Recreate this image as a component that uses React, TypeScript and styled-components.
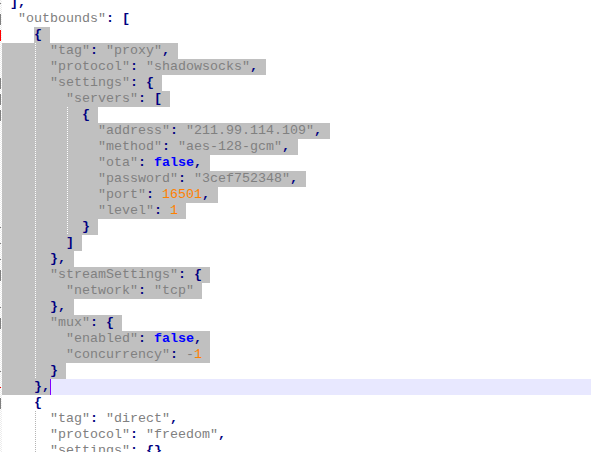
import React from "react";
import styled, { createGlobalStyle, css } from "styled-components";

const Global = createGlobalStyle`
  html, body { margin: 0; padding: 0; background: #ffffff; }
  body { width: 591px; height: 452px; overflow: hidden; }
`;

const CH = 8; // character advance in px

type Sel = "none" | "full" | "start" | "end";
type Marker = "bar" | "red" | "tick" | "redtick" | null;

interface LineData {
  indent: number;
  text: string;
  sel: Sel;
  marker: Marker;
  guides: number[];
  current?: boolean;
}

const L = (
  indent: number,
  text: string,
  sel: Sel,
  marker: Marker,
  guides: number[] = [],
  current = false
): LineData => ({ indent, text, sel, marker, guides, current });

const lines: LineData[] = [
  L(1, "],", "none", "tick"),
  L(2, '"outbounds": [', "none", "bar"),
  L(4, "{", "start", "red"),
  L(6, '"tag": "proxy",', "full", null, [4]),
  L(6, '"protocol": "shadowsocks",', "full", null, [4]),
  L(6, '"settings": {', "full", "bar", [4]),
  L(8, '"servers": [', "full", "bar", [4]),
  L(10, "{", "full", "bar", [4, 8]),
  L(12, '"address": "211.99.114.109",', "full", null, [4, 8]),
  L(12, '"method": "aes-128-gcm",', "full", null, [4, 8]),
  L(12, '"ota": false,', "full", null, [4, 8]),
  L(12, '"password": "3cef752348",', "full", null, [4, 8]),
  L(12, '"port": 16501,', "full", null, [4, 8]),
  L(12, '"level": 1', "full", null, [4, 8]),
  L(10, "}", "full", "tick", [4, 8]),
  L(8, "]", "full", "tick", [4]),
  L(6, "},", "full", "tick", [4]),
  L(6, '"streamSettings": {', "full", "bar", [4]),
  L(8, '"network": "tcp"', "full", null, [4]),
  L(6, "},", "full", "tick", [4]),
  L(6, '"mux": {', "full", "bar", [4]),
  L(8, '"enabled": false,', "full", null, [4]),
  L(8, '"concurrency": -1', "full", null, [4]),
  L(6, "}", "full", "tick", [4]),
  L(4, "},", "end", "redtick", [], true),
  L(4, "{", "none", "bar"),
  L(6, '"tag": "direct",', "none", null, [4]),
  L(6, '"protocol": "freedom",', "none", null, [4]),
  L(6, '"settings": {}', "none", null, [4]),
];

type Kind = "str" | "num" | "kw" | "brace" | "op" | "minus" | "ws";

function tokenize(text: string): { kind: Kind; value: string }[] {
  const re = /("(?:[^"\\]|\\.)*")|(\d+(?:\.\d+)?)|(true|false|null)|([{}\[\]])|([:,])|(-)|(\s+)/g;
  const out: { kind: Kind; value: string }[] = [];
  let m: RegExpExecArray | null;
  while ((m = re.exec(text))) {
    if (m[1]) out.push({ kind: "str", value: m[1] });
    else if (m[2]) out.push({ kind: "num", value: m[2] });
    else if (m[3]) out.push({ kind: "kw", value: m[3] });
    else if (m[4]) out.push({ kind: "brace", value: m[4] });
    else if (m[5]) out.push({ kind: "op", value: m[5] });
    else if (m[6]) out.push({ kind: "minus", value: m[6] });
    else if (m[7]) out.push({ kind: "ws", value: m[7] });
  }
  return out;
}

const Editor = styled.div`
  width: 591px;
  height: 452px;
  overflow: hidden;
  background: #ffffff;
  font-family: "Liberation Mono", "Courier New", monospace;
  font-size: 13.333px;
  line-height: 16px;
`;

const Lines = styled.div`
  display: flex;
  flex-direction: column;
  margin-top: -5px;
`;

const Row = styled.div`
  display: flex;
  height: 16px;
`;

const Margin = styled.div`
  flex: 0 0 2px;
  height: 16px;
  display: flex;
  align-items: center;
  background: repeating-conic-gradient(#ececec 0 25%, #ffffff 0 50%) 0 0 / 2px 2px;
`;

const Mark = styled.span<{ $red?: boolean; $tall?: boolean }>`
  width: 1px;
  height: ${(p) => (p.$tall ? "11px" : "1px")};
  background: ${(p) => (p.$red ? "#ff0000" : "#808080")};
`;

const Code = styled.div<{ $current?: boolean }>`
  position: relative;
  flex: 1;
  height: 16px;
  display: flex;
  white-space: pre;
  background: ${(p) => (p.$current ? "#e8e8ff" : "transparent")};
`;

const Selected = styled.span<{ $eol?: boolean }>`
  display: inline-block;
  height: 16px;
  background: #c0c0c0;
  padding-right: ${(p) => (p.$eol ? `${CH}px` : "0")};
`;

const Plain = styled.span`
  display: inline-block;
  height: 16px;
`;

const Tok = styled.span<{ $kind: Kind }>`
  ${(p) => {
    switch (p.$kind) {
      case "str":
        return css`color: #808080;`;
      case "num":
        return css`color: #ff8000;`;
      case "kw":
        return css`color: #0000ff; font-weight: bold;`;
      case "brace":
      case "op":
        return css`color: #000080; font-weight: bold;`;
      case "minus":
        return css`color: #808080;`;
      default:
        return css``;
    }
  }}
`;

const Guide = styled.span<{ $onSel: boolean }>`
  position: absolute;
  top: 0;
  width: 1px;
  height: 16px;
  background: repeating-linear-gradient(
    to bottom,
    ${(p) => (p.$onSel ? "#ffffff" : "#b4b4b4")} 0 1px,
    transparent 1px 2px
  );
`;

const Caret = styled.span`
  display: inline-block;
  width: 1px;
  height: 16px;
  background: #8000ff;
`;

function Tokens({ text }: { text: string }) {
  return (
    <>
      {tokenize(text).map((t, i) =>
        t.kind === "ws" ? (
          <React.Fragment key={i}>{t.value}</React.Fragment>
        ) : (
          <Tok key={i} $kind={t.kind}>
            {t.value}
          </Tok>
        )
      )}
    </>
  );
}

function CodeLine({ line }: { line: LineData }) {
  const spaces = " ".repeat(line.indent);
  let body: React.ReactNode;
  if (line.sel === "full") {
    body = (
      <Selected $eol>
        {spaces}
        <Tokens text={line.text} />
      </Selected>
    );
  } else if (line.sel === "start") {
    body = (
      <>
        <Plain>{spaces}</Plain>
        <Selected $eol>
          <Tokens text={line.text} />
        </Selected>
      </>
    );
  } else if (line.sel === "end") {
    body = (
      <>
        <Selected>
          {spaces}
          <Tokens text={line.text} />
        </Selected>
        <Caret />
      </>
    );
  } else {
    body = (
      <Plain>
        {spaces}
        <Tokens text={line.text} />
      </Plain>
    );
  }
  return (
    <Row>
      <Margin>
        {line.marker === "bar" && <Mark $tall />}
        {line.marker === "red" && <Mark $tall $red />}
        {line.marker === "tick" && <Mark />}
        {line.marker === "redtick" && <Mark $red />}
      </Margin>
      <Code $current={line.current}>
        {body}
        {line.guides.map((g) => (
          <Guide
            key={g}
            $onSel={line.sel !== "none"}
            style={{ left: g * CH + 1 }}
          />
        ))}
      </Code>
    </Row>
  );
}

export default function App() {
  return (
    <>
      <Global />
      <Editor>
        <Lines>
          {lines.map((l, i) => (
            <CodeLine key={i} line={l} />
          ))}
        </Lines>
      </Editor>
    </>
  );
}
